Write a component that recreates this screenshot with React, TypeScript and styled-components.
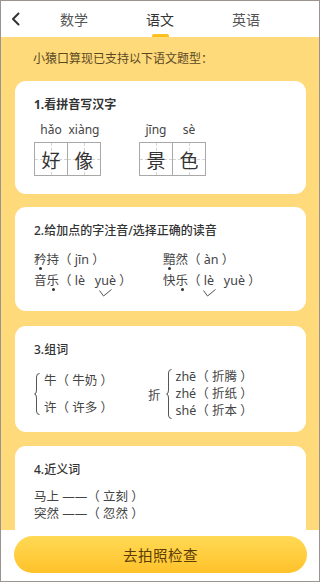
import styled, { createGlobalStyle } from "styled-components";

const Global = createGlobalStyle`
  html, body { margin: 0; padding: 0; }
  body { font-family: "Noto Sans", "Noto Sans CJK SC", sans-serif; }
  * { box-sizing: border-box; }
`;

const Frame = styled.div`
  width: 320px; height: 582px; border: 1px solid #9d938e; display: flex; flex-direction: column;
  overflow: hidden; background: #fff;
`;

const Header = styled.div`
  height: 36px; flex: none; display: grid; grid-template-columns: 30px repeat(3, 1fr) 30px;
  align-items: center; background: #fff;
`;
const Back = styled.button`
  border: 0; background: none; padding: 0 0 0 10px; height: 36px; display: flex; align-items: center; cursor: pointer;
`;
const Tab = styled.div<{ $active?: boolean }>`
  position: relative; height: 36px; display: flex; align-items: center; justify-content: center;
  font-family: "Noto Sans CJK SC", sans-serif; font-size: 14px; color: ${(p) => (p.$active ? "#333" : "#555")};
  &::after {
    content: ""; display: ${(p) => (p.$active ? "block" : "none")}; position: absolute; bottom: 0; left: 50%;
    width: 17px; height: 3px; margin-left: -8px; border-radius: 2px 2px 0 0; background: #ffc01c;
  }
`;

const Content = styled.div`
  flex: 1; overflow: hidden; background: #ffda7b; padding: 0 13px 0 14px;
`;
const Intro = styled.div`
  padding-top: 13px; margin-bottom: 15px; padding-left: 18px; line-height: 16px;
  font-family: "Noto Sans CJK SC", sans-serif; font-size: 12px; color: #5a4824;
`;

const Card = styled.section<{ $pb?: number; $mb?: number }>`
  background: #fff; border-radius: 11px; padding: 16px 19px ${(p) => p.$pb ?? 18}px;
  margin-bottom: ${(p) => p.$mb ?? 13}px;
  font-family: "Noto Sans", "Noto Sans CJK SC", sans-serif; color: #444; font-size: 12px;
`;
const Title = styled.div<{ $bold?: boolean }>`
  font-family: "Noto Sans", "Noto Sans CJK SC", sans-serif; font-size: 12px; line-height: 16px;
  font-weight: ${(p) => (p.$bold ? 700 : 500)}; color: #333;
`;

/* card 1 */
const Writing = styled.div` display: flex; gap: 38px; margin-top: 10px; `;
const Word = styled.div` display: flex; `;
const Syllable = styled.div`
  display: flex; flex-direction: column; align-items: center;
  & + & { margin-left: -1px; }
`;
const Pinyin = styled.div` font-size: 12px; line-height: 14px; margin-bottom: 5px; color: #444; `;
const Cell = styled.div`
  position: relative; width: 34px; height: 34px; border: 1px solid #a8a8a8;
  display: flex; align-items: center; justify-content: center;
  font-family: "Noto Sans CJK SC", sans-serif; font-size: 19px; color: #333;
  &::before { content: ""; position: absolute; left: 50%; top: 0; bottom: 0; border-left: 1px dashed #d4d4d4; }
  &::after { content: ""; position: absolute; top: 50%; left: 0; right: 0; border-top: 1px dashed #d4d4d4; }
  span { position: relative; z-index: 1; }
`;

/* card 2 */
const Readings = styled.div`
  display: grid; grid-template-columns: 129px 1fr; row-gap: 3px; margin-top: 12px; line-height: 18px;
`;
const Line = styled.div` white-space: pre; font-size: 12.5px; `;
const Dotted = styled.span`
  position: relative; display: inline-block;
  &::after {
    content: ""; position: absolute; left: 50%; bottom: -1px; width: 3px; height: 3px; margin-left: -1px;
    border-radius: 50%; background: #333;
  }
`;
const Picked = styled.span`
  position: relative; display: inline-block;
  svg { position: absolute; left: 50%; top: 17px; margin-left: -6px; }
`;

/* card 3 */
const Groups = styled.div` display: flex; align-items: center; margin-top: 11px; `;
const Group = styled.div<{ $w?: number }>`
  display: flex; align-items: center; gap: 4px; ${(p) => (p.$w ? `width: ${p.$w}px;` : "")}
`;
const Stack = styled.div<{ $gap: number }>`
  display: flex; flex-direction: column; gap: ${(p) => p.$gap}px; line-height: 16px; font-size: 12.5px; white-space: pre;
`;
const Root = styled.span` font-size: 12.5px; margin-right: 1px; `;

/* card 4 */
const Synonyms = styled.div` margin-top: 10px; line-height: 17px; font-size: 12.5px; white-space: pre; `;

const Bottom = styled.div`
  height: 51px; flex: none; background: #fff; padding: 6px 12px 0 13px;
`;
const Action = styled.button`
  width: 100%; height: 37px; border: 0; border-radius: 19px; cursor: pointer;
  background: linear-gradient(180deg, #ffd955 0%, #ffc22a 100%);
  font-family: "Noto Sans CJK SC", sans-serif; font-size: 14.5px; color: #5b3c08; letter-spacing: 0.5px;
`;

function Brace({ h }: { h: number }) {
  const m = h / 2;
  return (
    <svg width="6" height={h} viewBox={`0 0 6 ${h}`} fill="none" stroke="#555" strokeWidth="1">
      <path d={`M5.5 0.5 Q2.5 0.5 2.5 4 L2.5 ${m - 4} Q2.5 ${m} 0.5 ${m} Q2.5 ${m} 2.5 ${m + 4} L2.5 ${h - 4} Q2.5 ${h - 0.5} 5.5 ${h - 0.5}`} />
    </svg>
  );
}

function Tick() {
  return (
    <svg width="13" height="8" viewBox="0 0 13 8" fill="none" stroke="#555" strokeWidth="1">
      <polyline points="0.5,1.5 4.5,7 12.5,0.5" />
    </svg>
  );
}

const words = [
  [["hǎo", "好"], ["xiàng", "像"]],
  [["jīng", "景"], ["sè", "色"]],
];

export default function App() {
  return (
    <>
      <Global />
      <Frame>
        <Header>
          <Back aria-label="返回">
            <svg width="9" height="14" viewBox="0 0 9 14" fill="none" stroke="#333" strokeWidth="2" strokeLinecap="round" strokeLinejoin="round">
              <polyline points="7.5,1.5 2,7 7.5,12.5" />
            </svg>
          </Back>
          <Tab>数学</Tab>
          <Tab $active>语文</Tab>
          <Tab>英语</Tab>
          <div />
        </Header>

        <Content>
          <Intro>小猿口算现已支持以下语文题型：</Intro>

          <Card>
            <Title $bold>1.看拼音写汉字</Title>
            <Writing>
              {words.map((w, i) => (
                <Word key={i}>
                  {w.map(([py, ch]) => (
                    <Syllable key={ch}>
                      <Pinyin>{py}</Pinyin>
                      <Cell><span>{ch}</span></Cell>
                    </Syllable>
                  ))}
                </Word>
              ))}
            </Writing>
          </Card>

          <Card $pb={21} $mb={15}>
            <Title>2.给加点的字注音/选择正确的读音</Title>
            <Readings>
              <Line><Dotted>矜</Dotted>持（ jīn ）</Line>
              <Line><Dotted>黯</Dotted>然（ àn ）</Line>
              <Line>音<Dotted>乐</Dotted>（ lè   <Picked>yuè<Tick /></Picked> ）</Line>
              <Line>快<Dotted>乐</Dotted>（ <Picked>lè<Tick /></Picked>   yuè ）</Line>
            </Readings>
          </Card>

          <Card $pb={13} $mb={14}>
            <Title>3.组词</Title>
            <Groups>
              <Group $w={114}>
                <Brace h={42} />
                <Stack $gap={11}>
                  <span>牛（ 牛奶 ）</span>
                  <span>许（ 许多 ）</span>
                </Stack>
              </Group>
              <Group>
                <Root>折</Root>
                <Brace h={50} />
                <Stack $gap={1}>
                  <span>zhē（ 折腾 ）</span>
                  <span>zhé（ 折纸 ）</span>
                  <span>shé（ 折本 ）</span>
                </Stack>
              </Group>
            </Groups>
          </Card>

          <Card>
            <Title>4.近义词</Title>
            <Synonyms>
              <div>马上 ——（ 立刻 ）</div>
              <div>突然 ——（ 忽然 ）</div>
            </Synonyms>
          </Card>
        </Content>

        <Bottom>
          <Action>去拍照检查</Action>
        </Bottom>
      </Frame>
    </>
  );
}
